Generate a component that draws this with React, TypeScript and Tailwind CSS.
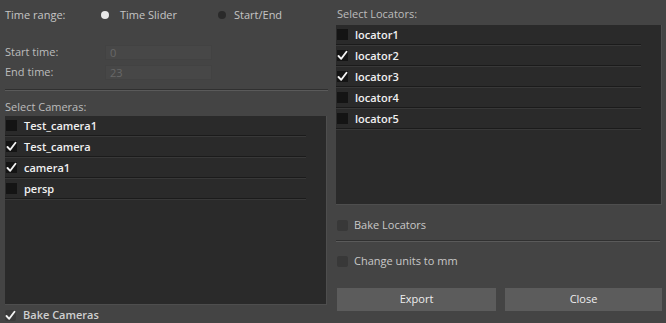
import React from "react";

const font = { fontFamily: '"Open Sans", "Liberation Sans", sans-serif' };

function Check() {
  return (
    <svg width="11" height="11" viewBox="0 0 11 11" className="block">
      <path d="M1.5 6 L4.2 8.8 L9.5 1.8" fill="none" stroke="#f2f2f2" strokeWidth="1.9" strokeLinecap="round" strokeLinejoin="round" />
    </svg>
  );
}

function Row({ label, checked }: { label: string; checked?: boolean }) {
  return (
    <div className="flex flex-col h-[21px]">
      <div className="flex items-center flex-1 pl-[1px]">
        <div className="w-[11px] h-[11px] bg-[#141414] flex items-center justify-center">
          {checked && <Check />}
        </div>
        <span className="ml-[7px] text-[11px] font-semibold text-[#f0f0f0] leading-none">{label}</span>
      </div>
      <div className="mr-[20px] h-[2px] border-t border-[#1b1b1b] border-b border-b-[#383838]" />
    </div>
  );
}

function Sep() {
  return <div className="h-[2px] border-t border-[#303030] border-b border-b-[#5a5a5a]" />;
}

export default function App() {
  return (
    <div style={font} className="w-[666px] h-[323px] bg-[#444444] flex overflow-hidden text-[11px] text-[#c4c4c4]">
      {/* left column */}
      <div className="w-[330px] pl-[5px] flex flex-col">
        <div className="flex items-center h-[14px] mt-[8px]">
          <span className="w-[96px]">Time range:</span>
          <span className="w-[8px] h-[8px] rounded-full bg-[#e8e8e8] mr-[11px]" />
          <span className="w-[98px]">Time Slider</span>
          <span className="w-[8px] h-[8px] rounded-full bg-[#2a2a2a] mr-[8px]" />
          <span>Start/End</span>
        </div>
        <div className="flex items-center h-[15px] mt-[23px]">
          <span className="w-[100px] text-[#bdbdbd]">Start time:</span>
          <div className="w-[107px] h-[15px] bg-[#474747] border border-[#424242] text-[#676767] pl-[4px] leading-[13px]">0</div>
        </div>
        <div className="flex items-center h-[15px] mt-[5px]">
          <span className="w-[100px] text-[#bdbdbd]">End time:</span>
          <div className="w-[107px] h-[15px] bg-[#474747] border border-[#424242] text-[#676767] pl-[4px] leading-[13px]">23</div>
        </div>
        <div className="mt-[9px] mr-[2px]"><Sep /></div>
        <div className="mt-[9px] h-[14px] leading-[14px] text-[#bcbcbc]">Select Cameras:</div>
        <div className="mt-[2px] w-[322px] h-[189px] bg-[#2a2a2a] border-r border-b border-[#4e4e4e] flex flex-col">
          <Row label="Test_camera1" />
          <Row label="Test_camera" checked />
          <Row label="camera1" checked />
          <Row label="persp" />
        </div>
        <div className="flex items-center mt-[3px] h-[14px]">
          <div className="w-[11px] h-[11px] bg-[#3a3a3a] rounded-[2px] flex items-center justify-center"><Check /></div>
          <span className="ml-[7px] font-semibold text-[#d0d0d0]">Bake Cameras</span>
        </div>
      </div>
      {/* right column */}
      <div className="w-[326px] ml-[6px] flex flex-col">
        <div className="mt-[7px] h-[14px] leading-[14px] text-[#bcbcbc] pl-[1px]">Select Locators:</div>
        <div className="mt-[4px] w-[326px] h-[180px] bg-[#2a2a2a] border-r border-b border-[#4e4e4e] flex flex-col">
          <Row label="locator1" />
          <Row label="locator2" checked />
          <Row label="locator3" checked />
          <Row label="locator4" />
          <Row label="locator5" />
        </div>
        <div className="flex items-center mt-[13px] h-[14px] pl-[1px]">
          <div className="w-[11px] h-[11px] bg-[#383838] rounded-[2px]" />
          <span className="ml-[6px] text-[#c8c8c8]">Bake Locators</span>
        </div>
        <div className="mt-[8px] mr-[2px]"><Sep /></div>
        <div className="flex items-center mt-[12px] h-[14px] pl-[1px]">
          <div className="w-[11px] h-[11px] bg-[#383838] rounded-[2px]" />
          <span className="ml-[6px] text-[#c8c8c8]">Change units to mm</span>
        </div>
        <div className="flex mt-[20px] gap-[9px] pl-[1px]">
          <div className="w-[159px] h-[23px] bg-[#5c5c5c] flex items-center justify-center text-[#eeeeee]">Export</div>
          <div className="w-[157px] h-[23px] bg-[#5c5c5c] flex items-center justify-center text-[#eeeeee]">Close</div>
        </div>
      </div>
    </div>
  );
}
